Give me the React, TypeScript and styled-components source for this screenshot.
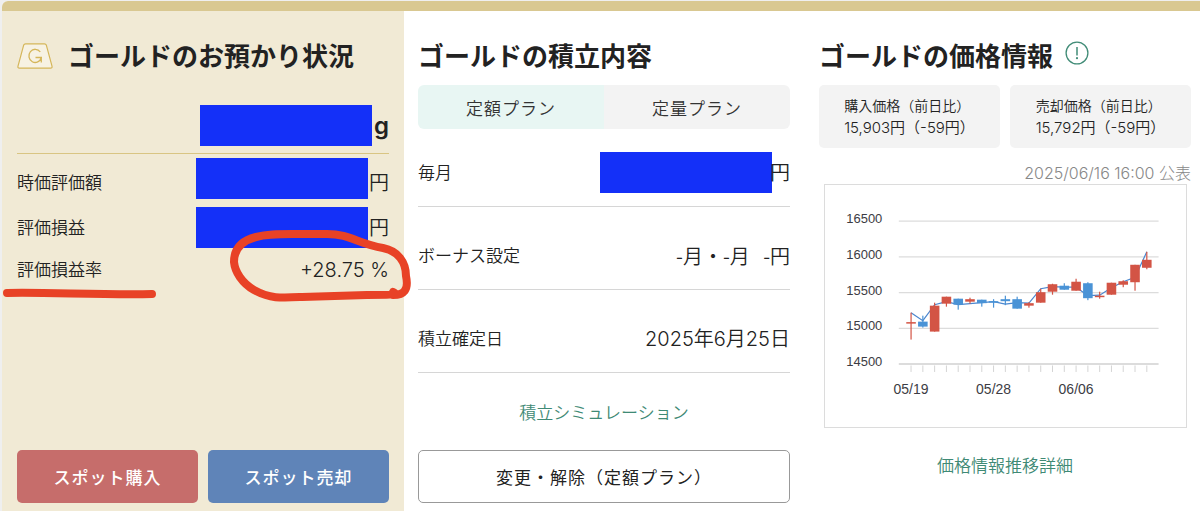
import React from "react";
import styled, { createGlobalStyle } from "styled-components";

const GlobalStyle = createGlobalStyle`
  *, *::before, *::after { box-sizing: border-box; }
  body {
    margin: 0;
    background: #efefef;
    color: #222;
    font-family: Inter, "Noto Sans CJK JP", sans-serif;
    font-size: 17px;
    font-weight: 350;
    line-height: 24px;
  }
  button { font-family: inherit; cursor: pointer; }
`;

const Card = styled.main`
  margin: 1px 0 0 2px;
  border-radius: 6px 0 0 0;
  overflow: hidden;
  background: #fff;
`;

const AccentBar = styled.div`
  height: 10px;
  background: #d9c891;
`;

const Columns = styled.div`
  display: grid;
  grid-template-columns: 402fr 400fr 396fr;
`;

const Column = styled.section<{ $tinted?: boolean; $pad: string }>`
  position: relative;
  display: flex;
  flex-direction: column;
  min-width: 0;
  padding: ${(p) => p.$pad};
  background: ${(p) => (p.$tinted ? "#f1ead5" : "transparent")};
  z-index: ${(p) => (p.$tinted ? 1 : 0)};
`;

const Header = styled.header<{ $gap: number }>`
  display: flex;
  align-items: center;
  gap: ${(p) => p.$gap}px;
  height: 30px;
  margin-bottom: 14px;
`;

const Title = styled.h2`
  margin: 0;
  padding-top: 2px;
  font-size: 26px;
  line-height: 30px;
  font-weight: 700;
  white-space: nowrap;
`;

const Mask = styled.span<{ $top?: boolean; $overlap?: boolean }>`
  width: 172px;
  height: 41px;
  background: #1430f8;
  align-self: ${(p) => (p.$top ? "flex-start" : "center")};
  margin-right: ${(p) => (p.$overlap ? "-3px" : "0")};
`;

const Weight = styled.div`
  display: flex;
  justify-content: flex-end;
  align-items: center;
  gap: 2px;
  margin: 20px 0 4px;
  padding-bottom: 7px;
  border-bottom: 1px solid #d9c583;
  font-size: 24px;
  font-weight: 600;
`;

const List = styled.dl`
  margin: 0;
`;

const Item = styled.div<{ $height: number }>`
  display: flex;
  justify-content: space-between;
  align-items: center;
  height: ${(p) => p.$height}px;
`;

const RuledItem = styled(Item)<{ $first?: boolean }>`
  height: auto;
  min-height: ${(p) => p.$height}px;
  margin-top: ${(p) => (p.$first ? 9 : 14)}px;
  padding: 14px 0 13px;
  border-bottom: 1px solid #d6d6d6;
`;

const Term = styled.dt``;

const Value = styled.dd<{ $plain?: boolean }>`
  display: flex;
  align-items: center;
  align-self: stretch;
  gap: 1px;
  margin: 0;
  font-family: ${(p) => (p.$plain ? '"Noto Sans CJK JP", sans-serif' : "inherit")};
  font-size: 20px;
  white-space: pre;
`;

const Actions = styled.div`
  display: grid;
  grid-template-columns: 1fr 1fr;
  gap: 10px;
  margin-top: auto;
`;

const Button = styled.button<{ $tone: "buy" | "sell" | "plain" }>`
  height: 53px;
  padding: 0;
  border: ${(p) => (p.$tone === "plain" ? "1px solid #999" : "0")};
  border-radius: 5px;
  background: ${(p) => ({ buy: "#c66d6b", sell: "#5f84b8", plain: "#fff" })[p.$tone]};
  color: ${(p) => (p.$tone === "plain" ? "#222" : "#fff")};
  font-size: 17px;
  font-weight: ${(p) => (p.$tone === "plain" ? 400 : 500)};
  letter-spacing: 1px;
`;

const Tabs = styled.div`
  display: grid;
  grid-template-columns: 1fr 1fr;
  height: 44px;
  border-radius: 6px;
  overflow: hidden;
`;

const Tab = styled.button<{ $active?: boolean }>`
  padding: 0;
  border: 0;
  background: ${(p) => (p.$active ? "#e8f6f3" : "#f3f3f3")};
  color: #333;
  font-size: 17px;
  font-weight: 350;
  letter-spacing: 1px;
`;

const TextLink = styled.a`
  align-self: center;
  color: #3f8a75;
  text-decoration: none;
`;

const SimulationLink = styled(TextLink)`
  margin: 28px 0 25px;
`;

const ChartLink = styled(TextLink)`
  margin-top: 26px;
`;

const InfoButton = styled.button`
  display: flex;
  padding: 0;
  margin-bottom: 6px;
  border: 0;
  background: none;
`;

const Prices = styled.div`
  display: grid;
  grid-template-columns: 1fr 1fr;
  gap: 10px;
`;

const Price = styled.dl`
  width: auto;
  margin: 0;
  padding: 10px 0 9px;
  display: grid;
  justify-content: center;
  border-radius: 5px;
  background: #f3f3f3;
  line-height: 22px;
`;

const PriceLabel = styled.dt`
  font-size: 14px;
`;

const PriceValue = styled.dd`
  margin: 0;
  font-size: 15px;
`;

const Published = styled.p`
  margin: 14px 0 0;
  color: #888;
  font-size: 16px;
  line-height: 22px;
  font-weight: 300;
  text-align: right;
`;

const ChartFrame = styled.figure`
  margin: 0 4px 0 5px;
  border: 1px solid #dcdcdc;
`;

const ChartSvg = styled.svg`
  display: block;
  width: 100%;
  height: auto;
  font-family: "Liberation Sans", sans-serif;
`;

const Markup = styled.svg`
  position: absolute;
  left: 0;
  top: 215px;
  width: 412px;
  height: 80px;
  overflow: visible;
  pointer-events: none;
`;

type Candle = { high: number; top: number; bottom: number; low: number; up: boolean; line: number };

const c = (high: number, top: number, bottom: number, low: number, up: boolean, line: number): Candle => ({
  high, top, bottom, low, up, line,
});

/* Vertical positions inside the chart, one entry per trading day. */
const candles: Candle[] = [
  c(128, 137.5, 139, 155, true, 128),
  c(131, 137, 142, 143, false, 136),
  c(118, 121, 147, 147, true, 120),
  c(112, 112, 119, 122, true, 117),
  c(114, 114, 120, 125, false, 120),
  c(113, 114.5, 117, 119, true, 119),
  c(115, 115, 118.5, 122, false, 118),
  c(114.5, 116.5, 118, 123, false, 117),
  c(111, 114.5, 116.5, 120.5, false, 119.5),
  c(112, 114.5, 124, 124, false, 118),
  c(117.5, 118.5, 121, 123, true, 118.5),
  c(104, 107.5, 118, 118, true, 104),
  c(99, 99.5, 107, 110, true, 102),
  c(98.5, 101, 105, 105, false, 102.5),
  c(94, 97, 106, 106, true, 102.5),
  c(97.5, 98.5, 113.5, 115.5, false, 111),
  c(107, 111, 112.5, 114, true, 110.5),
  c(98, 98, 110, 110, true, 103),
  c(95.5, 96.5, 100, 102.5, true, 97),
  c(80, 80, 97.5, 106, true, 92.5),
  c(67, 75, 83, 84.5, true, 67),
];

const dayX = (i: number) => 86.3 + i * 11.82;
const levels = [16500, 16000, 15500, 15000, 14500];
const dates = [
  { day: 0, label: "05/19" },
  { day: 7, label: "05/28" },
  { day: 14, label: "06/06" },
];

function PriceChart() {
  return (
    <ChartFrame>
      <ChartSvg viewBox="0 0 362 243" role="img" aria-label="ゴールド価格の推移">
        {levels.map((level, i) => (
          <g key={level}>
            <line x1="74" x2="334.5" y1={36.3 + i * 35.8} y2={36.3 + i * 35.8} stroke="#dcdcdc" strokeWidth={i === 4 ? 2 : 1.2} />
            <text x="57.5" y={38.5 + i * 35.8} textAnchor="end" fontSize="13" fill="#3c3c44">{level}</text>
          </g>
        ))}
        {candles.map((_, i) => (
          <line key={i} x1={dayX(i)} x2={dayX(i)} y1="181" y2="187.5" stroke="#d4d4d4" />
        ))}
        {dates.map((d) => (
          <text key={d.label} x={dayX(d.day)} y="210" textAnchor="middle" fontSize="14" fill="#3c3c44">{d.label}</text>
        ))}
        <polyline points={candles.map((d, i) => `${dayX(i)},${d.line}`).join(" ")} fill="none" stroke="#4a86cf" strokeWidth="1.2" />
        {candles.map((d, i) => (
          <g key={i} fill={d.up ? "#d35445" : "#4a93d6"} stroke="none">
            <rect x={dayX(i) - 0.6} y={d.high} width="1.2" height={d.low - d.high} />
            <rect x={dayX(i) - 4.8} y={d.top} width="9.6" height={d.bottom - d.top} />
          </g>
        ))}
      </ChartSvg>
    </ChartFrame>
  );
}

const GoldBar = () => (
  <svg width="36" height="26" viewBox="0 0 36 26" fill="none" stroke="#d5b65a" aria-hidden="true">
    <path d="M8.6.8h18.8q1.5 0 2 1.5l5.6 20.8q.5 2-1.5 2H2.500q-2 0-1.500-2L6.600 2.300Q7.100.8 8.600.8z" fill="#f7f2e3" strokeWidth="1.2" />
    <path d="M23.300 9A6.300 6.600 0 1 0 24.300 14.500H18.500M24.300 14.500V19.500" strokeWidth="1.3" />
  </svg>
);

const InfoIcon = () => (
  <svg width="24" height="24" viewBox="0 0 24 24" fill="none" stroke="#418c77" aria-hidden="true">
    <circle cx="12" cy="12" r="10.900" strokeWidth="1.3" />
    <path d="M12 6v8.500" strokeWidth="1.500" />
    <circle cx="12" cy="17.200" r="1.100" fill="#418c77" stroke="none" />
  </svg>
);

export default function App() {
  return (
    <>
      <GlobalStyle />
      <Card>
        <AccentBar />
        <Columns>
          <Column $tinted $pad="30px 15px 8px">
            <Header $gap={15}>
              <GoldBar />
              <Title>ゴールドのお預かり状況</Title>
            </Header>
            <Weight>
              <Mask />g
            </Weight>
            <List>
              <Item $height={49}>
                <Term>時価評価額</Term>
                <Value><Mask $top />円</Value>
              </Item>
              <Item $height={41}>
                <Term>評価損益</Term>
                <Value><Mask />円</Value>
              </Item>
              <Item $height={44}>
                <Term>評価損益率</Term>
                <Value>+28.75 %</Value>
              </Item>
            </List>
            <Actions>
              <Button type="button" $tone="buy">スポット購入</Button>
              <Button type="button" $tone="sell">スポット売却</Button>
            </Actions>
            <Markup viewBox="0 0 412 80" fill="none" stroke="#e84226" strokeWidth="8" strokeLinecap="round" strokeLinejoin="round" aria-hidden="true">
              <path d="M5 67C40 66 100 69 150 68" />
              <path d="M391 66C398 69 384 69 365 69L300 71C280 72 268 73 252 64C240 57 233 46 232 36C232 24 238 15 254 11C265 8 275 8 290 8H325C348 8 356 18 381 22C396 25 404 36 404 50C407 64 402 69 391 69" />
            </Markup>
          </Column>

          <Column $pad="30px 14px 8px">
            <Header $gap={0}>
              <Title>ゴールドの積立内容</Title>
            </Header>
            <Tabs role="tablist">
              <Tab type="button" role="tab" aria-selected="true" $active>定額プラン</Tab>
              <Tab type="button" role="tab" aria-selected="false">定量プラン</Tab>
            </Tabs>
            <List>
              <RuledItem $height={69} $first>
                <Term>毎月</Term>
                <Value><Mask $overlap />円</Value>
              </RuledItem>
              <RuledItem $height={69}>
                <Term>ボーナス設定</Term>
                <Value $plain>{"-月・-月   -円"}</Value>
              </RuledItem>
              <RuledItem $height={69}>
                <Term>積立確定日</Term>
                <Value>2025年6月25日</Value>
              </RuledItem>
            </List>
            <SimulationLink href="#simulation">積立シミュレーション</SimulationLink>
            <Button type="button" $tone="plain">変更・解除（定額プラン）</Button>
          </Column>

          <Column $pad="30px 9px 8px 15px">
            <Header $gap={12}>
              <Title>ゴールドの価格情報</Title>
              <InfoButton type="button" aria-label="価格情報について">
                <InfoIcon />
              </InfoButton>
            </Header>
            <Prices>
              <Price>
                <PriceLabel>購入価格（前日比）</PriceLabel>
                <PriceValue>15,903円（-59円）</PriceValue>
              </Price>
              <Price>
                <PriceLabel>売却価格（前日比）</PriceLabel>
                <PriceValue>15,792円（-59円）</PriceValue>
              </Price>
            </Prices>
            <Published>2025/06/16 16:00 公表</Published>
            <PriceChart />
            <ChartLink href="#price-history">価格情報推移詳細</ChartLink>
          </Column>
        </Columns>
      </Card>
    </>
  );
}
